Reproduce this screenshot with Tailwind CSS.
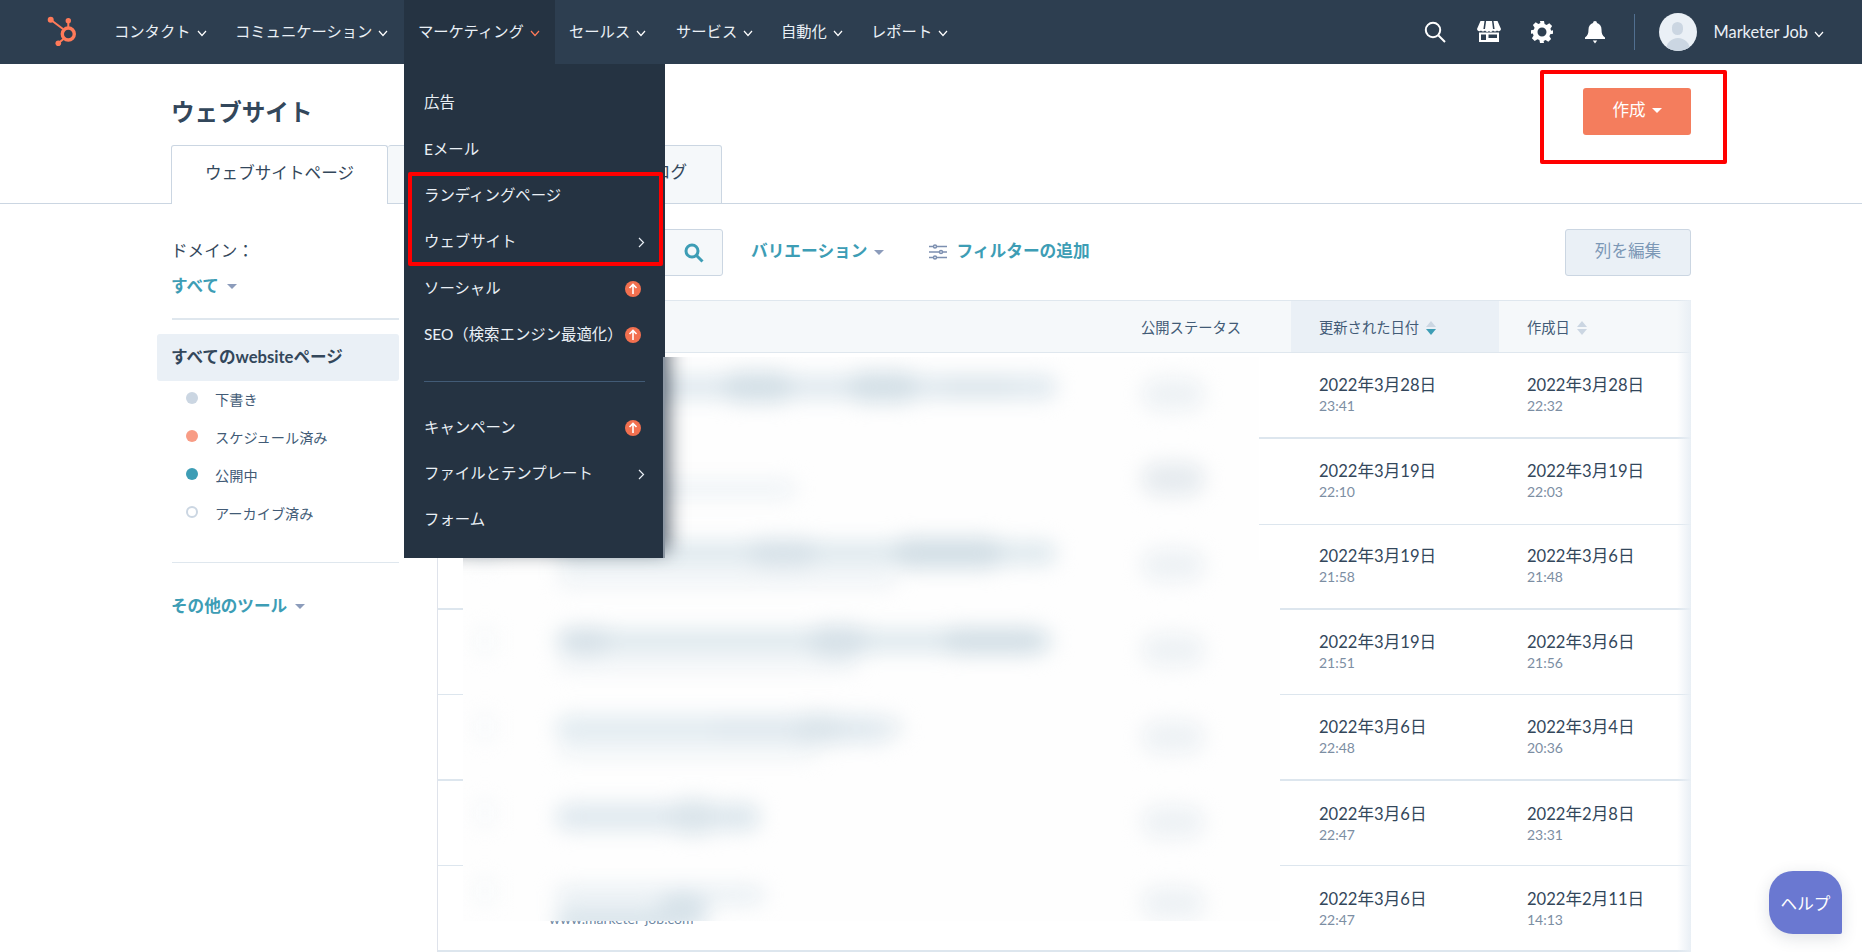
<!DOCTYPE html>
<html lang="ja">
<head>
  <meta charset="UTF-8" />
  <title>ウェブサイト</title>
  <script src="https://cdn.jsdelivr.net/npm/@tailwindcss/browser@4"></script>
</head>
<body class="relative h-[952px] overflow-hidden bg-white font-['Lato','Noto_Sans_CJK_JP',sans-serif] text-[#33475b]">

  <!-- top nav -->
  <nav class="flex h-16 items-center bg-[#2d3e50] text-[15.3px] text-[#eaf0f6]">
    <div class="flex h-16 w-[100px] shrink-0 items-center">
      <svg class="ml-[44px]" width="36" height="34" viewBox="44 17 36 34" fill="#ff7a59">
        <circle cx="50.7" cy="21.7" r="3"/><circle cx="68.3" cy="22.7" r="2.7"/><circle cx="58.3" cy="45.3" r="2.8"/>
        <path d="M50.7 21.7 63 31M68.3 22.7V30M58.3 45.3 63.5 41" stroke="#ff7a59" stroke-width="2" fill="none"/>
        <circle cx="68.3" cy="36" r="6" fill="none" stroke="#ff7a59" stroke-width="3.4"/>
      </svg>
    </div>
    <div class="flex h-16 w-[121px] items-center gap-[6px] pb-0.5 pl-[14px]">コンタクト<svg class="mt-1" width="10" height="7" viewBox="0 0 10 7" fill="none" stroke="#fff" stroke-width="1.200"><path d="m1 1 4 4.500L9 1"/></svg></div>
    <div class="flex h-16 w-[183px] items-center gap-[6px] pb-0.5 pl-[14px]">コミュニケーション<svg class="mt-1" width="10" height="7" viewBox="0 0 10 7" fill="none" stroke="#fff" stroke-width="1.200"><path d="m1 1 4 4.500L9 1"/></svg></div>
    <div class="flex h-16 w-[151px] items-center gap-[6px] bg-[#253342] pb-0.5 pl-[14px]">マーケティング<svg class="mt-1" width="10" height="7" viewBox="0 0 10 7" fill="none" stroke="#ff7a59" stroke-width="1.200"><path d="m1 1 4 4.500L9 1"/></svg></div>
    <div class="flex h-16 w-[107px] items-center gap-[6px] pb-0.5 pl-[14px]">セールス<svg class="mt-1" width="10" height="7" viewBox="0 0 10 7" fill="none" stroke="#fff" stroke-width="1.200"><path d="m1 1 4 4.500L9 1"/></svg></div>
    <div class="flex h-16 w-[105px] items-center gap-[6px] pb-0.5 pl-[14px]">サービス<svg class="mt-1" width="10" height="7" viewBox="0 0 10 7" fill="none" stroke="#fff" stroke-width="1.200"><path d="m1 1 4 4.500L9 1"/></svg></div>
    <div class="flex h-16 w-[92px] items-center gap-[6px] pb-0.5 pl-[14px]">自動化<svg class="mt-1" width="10" height="7" viewBox="0 0 10 7" fill="none" stroke="#fff" stroke-width="1.200"><path d="m1 1 4 4.500L9 1"/></svg></div>
    <div class="flex h-16 items-center gap-[6px] pb-0.5 pl-[12px]">レポート<svg class="mt-1" width="10" height="7" viewBox="0 0 10 7" fill="none" stroke="#fff" stroke-width="1.200"><path d="m1 1 4 4.500L9 1"/></svg></div>

    <div class="ml-auto flex items-center">
      <svg width="24" height="24" viewBox="0 0 24 24" fill="none" stroke="#fff" stroke-width="2"><circle cx="10" cy="10" r="7.2"/><path d="m15.5 15.5 6.5 6.5"/></svg>
      <svg class="ml-[30px]" width="24" height="22" viewBox="0 0 24 22" fill="#fff">
        <path d="M3.5 0h17L24 8a2.4 2.4 0 0 1-4 1.6A2.6 2.6 0 0 1 16 9.600a2.700 2.700 0 0 1-4 .4 2.700 2.700 0 0 1-4-.4A2.600 2.600 0 0 1 4 9.600 2.400 2.400 0 0 1 0 8z"/>
        <path d="M7.500 0h1.600L8 8H6.400zM15 0h1.500L17.600 8H16z" fill="#2d3e50"/>
        <path d="M2 11.500h20V21H2zm2 2V19h5v-5.500zm7.500 0V17H20v-3.500z" fill-rule="evenodd"/>
      </svg>
      <svg class="ml-[30px]" width="22" height="22" viewBox="0 0 22 22" fill="#fff">
        <path fill-rule="evenodd" d="M9 0h4l.6 3.100 2 .8L18.300 2.200l2.800 2.800-1.700 2.700.8 2L22 9.300v3.400l-2.800.6-.8 2 1.700 2.700-2.800 2.800-2.700-1.700-2 .8L13 22H9l-.6-2.900-2-.8-2.700 1.700L.9 17.200l1.700-2.700-.8-2L0 12.700V9.300l2.800-.6.8-2L1.900 4l2.800-2.800 2.700 1.700 2-.8zm2 6.500a4.500 4.500 0 1 0 0 9 4.500 4.500 0 0 0 0-9z"/>
      </svg>
      <svg class="ml-[32px]" width="20" height="23" viewBox="0 0 20 23" fill="#fff"><path d="M10 0a2 2 0 0 1 2 2c3 .8 4.500 3.400 4.500 6.500 0 4 .8 6 3.500 8V18H0v-1.500c2.700-2 3.500-4 3.500-8C3.500 5.400 5 2.800 8 2a2 2 0 0 1 2-2zM7.800 19.500h4.400L10 22.500z"/></svg>
      <div class="ml-[29px] h-9 w-px bg-[#516f90]"></div>
      <div class="relative ml-[24px] h-[38px] w-[38px] overflow-hidden rounded-full bg-[#eaf0f6]">
        <div class="mx-auto mt-[9px] h-[13px] w-[11px] rounded-full bg-[#cbd6e2]"></div>
        <div class="mx-auto mt-[3px] h-[20px] w-[24px] rounded-t-full bg-[#cbd6e2]"></div>
      </div>
      <span class="ml-[17px] text-[16.4px]">Marketer Job</span>
      <svg class="ml-[6px] mr-[38px] mt-1" width="10" height="7" viewBox="0 0 10 7" fill="none" stroke="#fff" stroke-width="1.200"><path d="m1 1 4 4.500L9 1"/></svg>
    </div>
  </nav>

  <!-- page header -->
  <header class="flex h-[140px] justify-between border-b border-[#cbd6e2] pl-[171px] pr-[171px]">
    <div>
      <h1 class="pt-[33px] text-[23.6px] font-bold leading-[30px]">ウェブサイト</h1>
      <div class="mt-[18px] flex h-[59px] text-[16.6px]">
        <div class="flex w-[217px] items-center justify-center rounded-t-[3px] border border-b-0 border-[#cbd6e2] bg-white pb-1">ウェブサイトページ</div>
        <div class="flex w-[334px] items-center justify-end rounded-t-[3px] border border-l-0 border-[#cbd6e2] bg-[#f5f8fa] pb-1 pr-[34px]">ブログ</div>
      </div>
    </div>
    <button class="mt-6 flex h-[47px] w-[108px] items-center justify-center gap-[6px] rounded-[3px] bg-[#f47d5d] pb-[2px] text-[16.6px] text-white">作成<span class="h-0 w-0 border-x-[5px] border-t-[5px] border-x-transparent border-t-white"></span></button>
  </header>

  <div class="flex">
    <!-- sidebar -->
    <aside class="ml-[157px] w-[242px] shrink-0 pt-[35px] text-[16.6px] leading-6">
      <div class="pl-[14px]">ドメイン：</div>
      <div class="mt-[11px] flex items-center gap-2 pl-[14px] font-bold text-[#3d9db5]">すべて<span class="h-0 w-0 border-x-[5px] border-t-[5px] border-x-transparent border-t-[#8c9cbb]"></span></div>
      <div class="ml-[15px] mt-[20px] h-0.5 bg-[#dfe7ee]"></div>
      <div class="mt-[14px] flex h-[47px] items-center rounded-[3px] bg-[#eaf0f6] pb-[2px] pl-[14px] font-bold">すべてのwebsiteページ</div>
      <ul class="-mt-0.5 text-[14.2px] text-[#425b76]">
        <li class="flex h-[38px] items-center"><span class="ml-[29px] h-3 w-3 rounded-full bg-[#cbd6e2]"></span><span class="ml-[17px] mt-1">下書き</span></li>
        <li class="flex h-[38px] items-center"><span class="ml-[29px] h-3 w-3 rounded-full bg-[#f89c85]"></span><span class="ml-[17px] mt-1">スケジュール済み</span></li>
        <li class="flex h-[38px] items-center"><span class="ml-[29px] h-3 w-3 rounded-full bg-[#3d9db5]"></span><span class="ml-[17px] mt-1">公開中</span></li>
        <li class="flex h-[38px] items-center"><span class="ml-[29px] h-3 w-3 rounded-full border-2 border-[#cbd6e2]"></span><span class="ml-[17px] mt-1">アーカイブ済み</span></li>
      </ul>
      <div class="ml-[15px] mt-[31px] h-px bg-[#dfe7ee]"></div>
      <div class="mt-[31px] flex items-center gap-2 pl-[14px] font-bold text-[#3d9db5]">その他のツール<span class="h-0 w-0 border-x-[5px] border-t-[5px] border-x-transparent border-t-[#8c9cbb]"></span></div>
    </aside>

    <main class="ml-[38px] w-[1254px] shrink-0 pt-[25px]">
      <!-- toolbar -->
      <div class="flex h-[47px] items-center text-[16.7px] font-bold text-[#3d9db5]">
        <div class="flex h-[47px] w-[286px] items-center justify-end rounded-[3px] border border-[#cbd6e2] bg-[#f5f8fa] pr-[18px]">
          <svg width="20" height="20" viewBox="0 0 20 20" fill="none" stroke="#3d9db5" stroke-width="3"><circle cx="8" cy="8" r="6"/><path d="m12.500 12.500 6 6"/></svg>
        </div>
        <span class="mb-[2px] ml-7">バリエーション</span>
        <span class="ml-[7px] h-0 w-0 border-x-[5px] border-t-[5px] border-x-transparent border-t-[#8c9cbb]"></span>
        <svg class="mb-[2px] ml-[45px]" width="18" height="16" viewBox="0 0 18 16" fill="none" stroke="#7c8fb0" stroke-width="1.500"><path d="M0 2.500h18M0 8h18M0 13.500h18"/><circle cx="6" cy="2.500" r="1.500" fill="#fff"/><circle cx="12" cy="8" r="1.500" fill="#fff"/><circle cx="6" cy="13.500" r="1.500" fill="#fff"/></svg>
        <span class="mb-[2px] ml-[9px]">フィルターの追加</span>
        <button class="ml-auto h-[47px] w-[126px] rounded-[3px] border border-[#cbd6e2] bg-[#eaf0f6] pb-[2px] text-[16.6px] font-normal text-[#7c98b6]">列を編集</button>
      </div>

      <!-- table -->
      <div class="relative mt-6 border-l border-[#dfe3eb] text-[16.6px]">
        <div class="flex h-[53px] items-center border-y border-[#dfe7ee] bg-[#f5f8fa] pt-0.5 text-[14.3px] text-[#425b76]">
          <div class="w-[679px]"></div>
          <div class="w-[174px] pl-6">公開ステータス</div>
          <div class="-mt-0.5 flex h-[51px] w-[208px] items-center gap-[7px] bg-[#eaf0f6] pl-7 pt-0.5">更新された日付
            <span class="flex flex-col gap-[2px]"><span class="h-0 w-0 border-x-[5px] border-b-[6px] border-x-transparent border-b-[#cbd6e2]"></span><span class="h-0 w-0 border-x-[5px] border-t-[6px] border-x-transparent border-t-[#3d9db5]"></span></span></div>
          <div class="flex w-[192px] items-center gap-[7px] pl-7">作成日
            <span class="flex flex-col gap-[2px]"><span class="h-0 w-0 border-x-[5px] border-b-[6px] border-x-transparent border-b-[#cbd6e2]"></span><span class="h-0 w-0 border-x-[5px] border-t-[6px] border-x-transparent border-t-[#cbd6e2]"></span></span></div>
        </div>

        <div class="flex h-[86px] border-b-2 border-[#dde6ee]">
          <div class="w-[853px]"></div>
          <div class="w-[208px] pl-7 pt-[21px]"><p class="leading-[22px]">2022年3月28日</p><p class="text-[14px] leading-5 text-[#7c8ea3]">23:41</p></div>
          <div class="w-[192px] pl-7 pt-[21px]"><p class="leading-[22px]">2022年3月28日</p><p class="text-[14px] leading-5 text-[#7c8ea3]">22:32</p></div>
        </div>
        <div class="flex h-[86px] border-b border-[#dde6ee]">
          <div class="w-[853px]"></div>
          <div class="w-[208px] pl-7 pt-[21px]"><p class="leading-[22px]">2022年3月19日</p><p class="text-[14px] leading-5 text-[#7c8ea3]">22:10</p></div>
          <div class="w-[192px] pl-7 pt-[21px]"><p class="leading-[22px]">2022年3月19日</p><p class="text-[14px] leading-5 text-[#7c8ea3]">22:03</p></div>
        </div>
        <div class="flex h-[85px] border-b-2 border-[#dde6ee]">
          <div class="w-[853px]"></div>
          <div class="w-[208px] pl-7 pt-[20px]"><p class="leading-[22px]">2022年3月19日</p><p class="text-[14px] leading-5 text-[#7c8ea3]">21:58</p></div>
          <div class="w-[192px] pl-7 pt-[20px]"><p class="leading-[22px]">2022年3月6日</p><p class="text-[14px] leading-5 text-[#7c8ea3]">21:48</p></div>
        </div>
        <div class="flex h-[85px] border-b border-[#dde6ee]">
          <div class="w-[853px]"></div>
          <div class="w-[208px] pl-7 pt-[21px]"><p class="leading-[22px]">2022年3月19日</p><p class="text-[14px] leading-5 text-[#7c8ea3]">21:51</p></div>
          <div class="w-[192px] pl-7 pt-[21px]"><p class="leading-[22px]">2022年3月6日</p><p class="text-[14px] leading-5 text-[#7c8ea3]">21:56</p></div>
        </div>
        <div class="flex h-[86px] border-b-2 border-[#dde6ee]">
          <div class="w-[853px]"></div>
          <div class="w-[208px] pl-7 pt-[21px]"><p class="leading-[22px]">2022年3月6日</p><p class="text-[14px] leading-5 text-[#7c8ea3]">22:48</p></div>
          <div class="w-[192px] pl-7 pt-[21px]"><p class="leading-[22px]">2022年3月4日</p><p class="text-[14px] leading-5 text-[#7c8ea3]">20:36</p></div>
        </div>
        <div class="flex h-[85px] border-b border-[#dde6ee]">
          <div class="w-[853px]"></div>
          <div class="w-[208px] pl-7 pt-[22px]"><p class="leading-[22px]">2022年3月6日</p><p class="text-[14px] leading-5 text-[#7c8ea3]">22:47</p></div>
          <div class="w-[192px] pl-7 pt-[22px]"><p class="leading-[22px]">2022年2月8日</p><p class="text-[14px] leading-5 text-[#7c8ea3]">23:31</p></div>
        </div>
        <div class="flex h-[86px] border-b-2 border-[#dde6ee]">
          <div class="w-[853px]"></div>
          <div class="w-[208px] pl-7 pt-[22px]"><p class="leading-[22px]">2022年3月6日</p><p class="text-[14px] leading-5 text-[#7c8ea3]">22:47</p></div>
          <div class="w-[192px] pl-7 pt-[22px]"><p class="leading-[22px]">2022年2月11日</p><p class="text-[14px] leading-5 text-[#7c8ea3]">14:13</p></div>
        </div>

        <!-- fade on the right edge of the table -->
        <div class="absolute inset-y-0 right-0 w-[14px] bg-gradient-to-r from-transparent to-[#e9eff5]"></div>
      </div>
    </main>
  </div>

  <!-- bottom of the last url, the blurred patch stops just above it -->
  <div class="absolute left-[549px] top-[921px] h-[8px] overflow-hidden text-[14px] leading-5 text-[#6f88a3]"><p class="-mt-[12px]">www.marketer-job.com</p></div>

  <!-- blurred rows pasted over the table -->
  <div class="absolute left-[463px] top-[357px] h-[564px] w-[817px] overflow-hidden bg-[#fefefe] [clip-path:polygon(0_0,796px_0,796px_203px,817px_203px,817px_566px,0_566px)]">
    <div class="absolute -left-5 -top-5 h-[620px] w-[860px] blur-[10px]">
      <!-- checkboxes -->
      <div class="absolute left-[30px] top-[200px] h-7 w-[24px] rounded bg-[#f8fafb]"></div>
      <div class="absolute left-[30px] top-[290px] h-7 w-[24px] rounded bg-[#f8fafb]"></div>
      <div class="absolute left-[30px] top-[376px] h-7 w-[24px] rounded bg-[#f8fafb]"></div>
      <div class="absolute left-[30px] top-[462px] h-7 w-[24px] rounded bg-[#f8fafb]"></div>
      <div class="absolute left-[30px] top-[540px] h-7 w-[24px] rounded bg-[#f8fafb]"></div>
      <!-- titles -->
      <div class="absolute left-[114px] top-[38px] h-6 w-[500px] rounded-full bg-[#e0e9ef]"></div>
      <div class="absolute left-[280px] top-[34px] h-8 w-[70px] rounded-full bg-[#d4e0e7]"></div>
      <div class="absolute left-[405px] top-[34px] h-8 w-[70px] rounded-full bg-[#d4e0e7]"></div>
      <div class="absolute left-[500px] top-[38px] h-6 w-[70px] rounded-full bg-[#dbe5eb]"></div>
      <div class="absolute left-[114px] top-[142px] h-5 w-[240px] rounded-full bg-[#f0f4f7]"></div>
      <div class="absolute left-[114px] top-[204px] h-6 w-[500px] rounded-full bg-[#dfe9ee]"></div>
      <div class="absolute left-[305px] top-[202px] h-7 w-[70px] rounded-full bg-[#d6e1e8]"></div>
      <div class="absolute left-[450px] top-[200px] h-8 w-[110px] rounded-full bg-[#d3dfe6]"></div>
      <div class="absolute left-[114px] top-[234px] h-4 w-[340px] rounded-full bg-[#eff3f6]"></div>
      <div class="absolute left-[112px] top-[292px] h-6 w-[498px] rounded-full bg-[#dfe9ee]"></div>
      <div class="absolute left-[118px] top-[290px] h-7 w-[50px] rounded-full bg-[#d6e1e8]"></div>
      <div class="absolute left-[365px] top-[288px] h-8 w-[60px] rounded-full bg-[#d6e1e8]"></div>
      <div class="absolute left-[500px] top-[290px] h-7 w-[100px] rounded-full bg-[#d3dfe6]"></div>
      <div class="absolute left-[114px] top-[322px] h-3 w-[300px] rounded-full bg-[#eff3f6]"></div>
      <div class="absolute left-[112px] top-[378px] h-7 w-[240px] rounded-full bg-[#e3ecf1]"></div>
      <div class="absolute left-[270px] top-[378px] h-7 w-[180px] rounded-full bg-[#e0e9ef]"></div>
      <div class="absolute left-[350px] top-[376px] h-8 w-[50px] rounded-full bg-[#dbe5eb]"></div>
      <div class="absolute left-[430px] top-[380px] h-5 w-[30px] rounded-full bg-[#e6edf1]"></div>
      <div class="absolute left-[114px] top-[410px] h-3 w-[260px] rounded-full bg-[#f1f5f7]"></div>
      <div class="absolute left-[112px] top-[466px] h-7 w-[206px] rounded-full bg-[#e0e9ef]"></div>
      <div class="absolute left-[225px] top-[462px] h-9 w-[50px] rounded-full bg-[#dbe5eb]"></div>
      <div class="absolute left-[280px] top-[468px] h-6 w-[32px] rounded-full bg-[#dde7ed]"></div>
      <div class="absolute left-[112px] top-[548px] h-5 w-[210px] rounded-full bg-[#eaf0f4]"></div>
      <div class="absolute left-[112px] top-[572px] h-6 w-[130px] rounded-full bg-[#d7e3ea]"></div>
      <div class="absolute left-[215px] top-[554px] h-10 w-[50px] rounded-full bg-[#d8e3ea]"></div>
      <!-- status -->
      <div class="absolute left-[698px] top-[40px] h-[34px] w-[64px] rounded-full bg-[#eef2f5]"></div>
      <div class="absolute left-[698px] top-[125px] h-[34px] w-[64px] rounded-full bg-[#e6ebef]"></div>
      <div class="absolute left-[698px] top-[211px] h-[34px] w-[64px] rounded-full bg-[#eef2f5]"></div>
      <div class="absolute left-[698px] top-[296px] h-[34px] w-[64px] rounded-full bg-[#eef2f5]"></div>
      <div class="absolute left-[698px] top-[383px] h-[34px] w-[64px] rounded-full bg-[#eef2f5]"></div>
      <div class="absolute left-[698px] top-[468px] h-[34px] w-[64px] rounded-full bg-[#eef2f5]"></div>
      <div class="absolute left-[698px] top-[549px] h-[34px] w-[64px] rounded-full bg-[#eef2f5]"></div>
    </div>
    <!-- shadow of the menu baked into the blur -->
    <div class="absolute -left-[100px] -top-[60px] h-[254px] w-[305px] bg-[#253342]/80 blur-[10px]"></div>
  </div>

  <!-- marketing dropdown -->
  <div class="absolute left-[404px] top-16 z-20 w-[261px] bg-[#253342] pb-[15px] pt-4 text-[15.4px] text-[#eaf0f6]">
    <div class="flex h-[46px] items-center pl-5">広告</div>
    <div class="flex h-[47px] items-center pl-5">Eメール</div>
    <div class="flex h-[46px] items-center pl-5">ランディングページ</div>
    <div class="flex h-[46px] items-center justify-between pl-5 pr-[20px]">ウェブサイト<svg width="7" height="11" viewBox="0 0 7 11" fill="none" stroke="#eaf0f6" stroke-width="1.200"><path d="m1 1 4.500 4.500L1 10"/></svg></div>
    <div class="flex h-[47px] items-center justify-between pl-5 pr-6">ソーシャル
      <svg width="16" height="16" viewBox="0 0 16 16"><circle cx="8" cy="8" r="8" fill="#f2704f"/><path d="M8 13V3.500M4.500 7 8 3.500 11.500 7" fill="none" stroke="#fff" stroke-width="1.600"/></svg></div>
    <div class="flex h-[46px] items-center justify-between pl-5 pr-6">SEO（検索エンジン最適化）
      <svg class="shrink-0" width="16" height="16" viewBox="0 0 16 16"><circle cx="8" cy="8" r="8" fill="#f2704f"/><path d="M8 13V3.500M4.500 7 8 3.500 11.500 7" fill="none" stroke="#fff" stroke-width="1.600"/></svg></div>
    <div class="mb-[22px] ml-5 mr-[20px] mt-[23px] h-px bg-[#425b76]"></div>
    <div class="flex h-[47px] items-center justify-between pl-5 pr-6">キャンペーン
      <svg width="16" height="16" viewBox="0 0 16 16"><circle cx="8" cy="8" r="8" fill="#f2704f"/><path d="M8 13V3.500M4.500 7 8 3.500 11.500 7" fill="none" stroke="#fff" stroke-width="1.600"/></svg></div>
    <div class="flex h-[46px] items-center justify-between pl-5 pr-[20px]">ファイルとテンプレート<svg width="7" height="11" viewBox="0 0 7 11" fill="none" stroke="#eaf0f6" stroke-width="1.200"><path d="m1 1 4.500 4.500L1 10"/></svg></div>
    <div class="flex h-[46px] items-center pl-5">フォーム</div>
  </div>
  <div class="absolute left-[663px] top-[357px] z-30 h-[201px] w-0.5 bg-[#8b96a2]"></div>

  <!-- red annotation boxes -->
  <div class="absolute left-[408px] top-[172px] z-30 h-[94px] w-[255px] rounded-[2px] border-4 border-[#ff0000]"></div>
  <div class="absolute left-[1540px] top-[70px] z-30 h-[94px] w-[187px] rounded-[2px] border-4 border-[#ff0000]"></div>

  <!-- help -->
  <button class="absolute left-[1769px] top-[871px] z-30 h-[63px] w-[73px] rounded-[24px] rounded-br-[2px] bg-[#6a78d1] pt-1 text-[16.6px] text-white shadow-[0_4px_16px_rgba(45,62,80,0.15)]">ヘルプ</button>
</body>
</html>
